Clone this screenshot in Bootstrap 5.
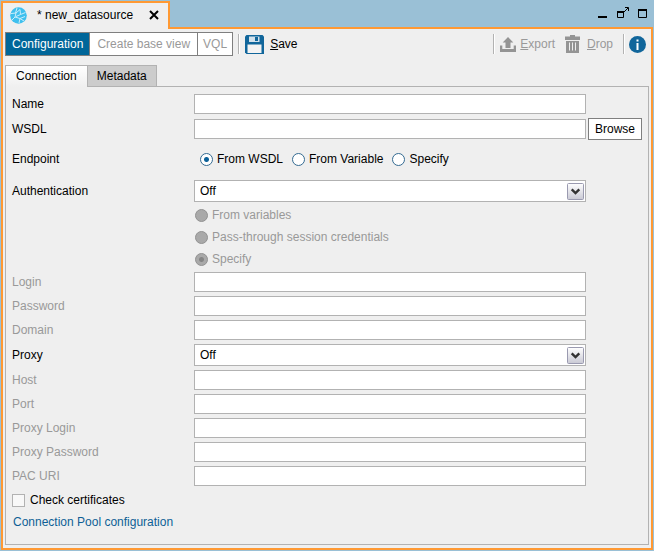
<!DOCTYPE html>
<html lang="en">
<head>
<meta charset="utf-8">
<meta name="viewport" content="width=device-width, initial-scale=1">
<title>new_datasource</title>
<link rel="stylesheet" href="https://cdn.jsdelivr.net/npm/bootstrap@5.3.0/dist/css/bootstrap.min.css">
<style>
:root{--sky:#9ac0d6;--orange:#ff9933;--face:#efefef;--line:#b2b2b2;--edge:#7f7f7f;--blue:#006699;--off:#999}
body{font:12px/16px "Liberation Sans",Arial,sans-serif;color:#000;background:var(--sky)}
.window{padding:1px}
.titlebar{height:26px}
.doc-tab{height:28px;margin-bottom:-2px;padding:0 9px 2px 7px;gap:10px;background:var(--face);border:2px solid var(--orange);border-bottom:0;z-index:1}
.doc-title{padding-right:6px}
.window-tools{gap:7px;padding-right:4px}
.plain{border:0;background:none;padding:0;color:#000;line-height:16px;display:flex;align-items:center}
.plain:disabled{color:var(--off)}
.frame{border:2px solid var(--orange);background:var(--face);padding:3px 2px 3px 2px}
.modes .btn{font-size:12px;line-height:16px;height:24px;padding:0 6px;border:1px solid var(--edge);border-radius:0;background:#fff;color:var(--off);opacity:1}
.modes .btn:disabled{padding:0 7px}
.modes .btn:last-child{padding:0 5px}
.modes .btn.active{background:var(--blue);color:#fff}
.rule{width:2px;height:20px;background:linear-gradient(90deg,var(--line) 50%,#fff 50%)}
.mode-rule{margin:0 5px}
.save{gap:6px}
.tools{padding-right:3px;gap:10px}
.tool{gap:4px}
.tool.drop{gap:7px}
.tool-set{gap:5px}
.info-set{gap:4px}
.tabs{margin-top:9px;height:21px}
.tabs .nav-link{height:21px;padding:0 9px;color:#000;border:1px solid var(--line);border-bottom:0;border-radius:0;background:#ccc;margin-left:-1px;line-height:21px}
.tabs .nav-link.active{height:22px;padding:0 10px;background:linear-gradient(#fff,var(--face));margin-left:0;position:relative;z-index:1}
.panel{border:1px solid var(--line);padding:7px 6px;gap:4px}
.line{height:20px}
.line.tall{height:22px}
.endpoint-line{margin:4px 0 6px}
.name{width:182px;flex:none}
.aside{width:54px;margin-left:2px;flex:none}
.muted,.muted label{color:var(--off)}
.form-control,.form-select{height:20px;min-height:0;padding:0 5px;font-size:12px;line-height:16px;color:#000;border:1px solid var(--line);border-radius:0;background-color:#fff}
.form-control:disabled{background:#fff}
.form-select{height:22px;background-size:17px 17px;background-position:right 1px top 2px;background-image:url("data:image/svg+xml,%3Csvg xmlns='http://www.w3.org/2000/svg' viewBox='0 0 17 17'%3E%3Cdefs%3E%3ClinearGradient id='g' x2='0' y2='1'%3E%3Cstop stop-color='%23fff'/%3E%3Cstop offset='1' stop-color='%23c9c9d4'/%3E%3C/linearGradient%3E%3C/defs%3E%3Crect x='.5' y='.5' width='16' height='16' rx='1' fill='url(%23g)' stroke='%239a9ab0'/%3E%3Cpath d='M4.7 6.3 8.5 10l3.8-3.7' fill='none' stroke='%23333' stroke-width='2.4'/%3E%3C/svg%3E")}
.browse{height:22px;padding:0;font-size:12px;line-height:16px;border:1px solid var(--edge);border-radius:0;background:#fff;color:#000}
.form-check-input{width:13px;height:13px;margin:0;flex:none;border-color:var(--line)}
.form-check-input[type=checkbox]{border-radius:0;background-color:#f8f8f8}
.form-check-input[type=radio]{border-color:#336a91;background-color:#fff;background-image:none}
.form-check-input[type=radio]:checked{background-image:radial-gradient(circle,#0b6199 2px,transparent 3px)}
.form-check-input[type=radio]:disabled{opacity:1;border-color:#929292;background-color:#a9a9a9}
.form-check-input[type=radio]:disabled:checked{background-image:radial-gradient(circle,#858585 2px,transparent 3px)}
.form-check-input:disabled~label{opacity:1;color:var(--off)}
.choice{display:flex;align-items:center;gap:4px;height:22px}
.choice.tick{gap:5px}
.endpoint{gap:9px;padding-left:6px}
.credentials{margin:-2px 0}
.credential-list{padding-left:1px}
.extras{margin-top:-1px}
.pool{color:#0e5f96;text-decoration:none;padding-left:1px;line-height:22px}
svg{display:block;flex:none}
</style>
<script src="https://cdn.jsdelivr.net/npm/bootstrap@5.3.0/dist/js/bootstrap.bundle.min.js"></script>
</head>
<body>
<div class="window min-vh-100 d-flex flex-column">
  <header class="titlebar d-flex justify-content-between">
    <div class="doc-tab d-flex align-items-center position-relative">
      <svg width="17" height="17" viewBox="0 0 17 17"><circle cx="8.500" cy="8.500" r="8.300" fill="#3fc0ee"/><path d="M1 6.500l5-.500 4-3.500M6 6l-1 4-3 3M5 10l5 1.500 5-2M10 11.500L9 16M10 2.500l.500 5L6 9.500M10.500 7.500l5-2M7 1L5.500 6M10 11.500l4 2.500" fill="none" stroke="#c9eefb" stroke-width="1"/></svg>
      <span class="doc-title">* new_datasource</span>
      <button class="plain" aria-label="Close tab"><svg width="10" height="10" viewBox="0 0 10 10"><path d="M1 1l8 8M9 1L1 9" stroke="#000" stroke-width="2"/></svg></button>
    </div>
    <div class="window-tools d-flex align-items-center">
      <button class="plain" aria-label="Minimize"><svg width="13" height="14" viewBox="0 0 13 14"><path d="M2 9h9v2H2z"/></svg></button>
      <button class="plain" aria-label="Detach"><svg width="13" height="14" viewBox="0 0 13 14"><path d="M1.500 4.500h6v6h-6zM7.500 5.500L12 1M9 .500h3.500V4" fill="none" stroke="#000"/><path d="M1 4h7v2H1z"/></svg></button>
      <button class="plain" aria-label="Maximize"><svg width="13" height="14" viewBox="0 0 13 14"><path d="M2.500 2.500h8v8h-8z" fill="none" stroke="#000"/><path d="M2 2h9v2H2z"/></svg></button>
    </div>
  </header>
  <main class="frame flex-grow-1 d-flex flex-column">
    <div class="d-flex justify-content-between align-items-center">
      <div class="d-flex align-items-center">
        <div class="btn-group modes">
          <button class="btn active">Configuration</button>
          <button class="btn" disabled>Create base view</button>
          <button class="btn" disabled>VQL</button>
        </div>
        <span class="rule mode-rule"></span>
        <button class="plain save"><svg width="19" height="19" viewBox="0 0 19 19"><path d="M1.500 0h16L19 1.500V19H1.500L0 17.500V1.500z" fill="#11669b"/><path d="M2.500 9.500h14V18h-14z" fill="#f3f3f3"/><path d="M4 1.500h10.500V7H4z" fill="#d3e2ec"/><path d="M10 2h3v4h-3z" fill="#11669b"/></svg><span><u>S</u>ave</span></button>
      </div>
      <div class="tools d-flex align-items-center">
        <div class="tool-set d-flex align-items-center">
          <span class="rule"></span>
          <button class="plain tool" disabled><svg width="16" height="15" viewBox="0 0 16 15"><path d="M8 0l5.300 5.500h-2.800V11h-5V5.500H2.700zM0 8.500h2.300V12h11.400V8.500H16V15H0z" fill="#949494"/></svg><span><u>E</u>xport</span></button>
        </div>
        <button class="plain tool drop" disabled><svg width="15" height="18" viewBox="0 0 15 18"><path d="M5 0h5v1.500h5V5H0V1.500h5zM1 6h13v12H1z" fill="#949494"/><path d="M4.500 7.500v8M7.500 7.500v8M10.500 7.500v8" stroke="#eee"/></svg><span><u>D</u>rop</span></button>
        <div class="info-set d-flex align-items-center">
          <span class="rule"></span>
          <button class="plain" aria-label="Information"><svg width="17" height="17" viewBox="0 0 17 17"><circle cx="8.500" cy="8.500" r="8.500" fill="#11669b"/><path d="M7.500 3.500h2v2h-2zM7.500 7h2v7h-2z" fill="#fff"/></svg></button>
        </div>
      </div>
    </div>
    <nav class="nav tabs">
      <a class="nav-link active" href="#connection">Connection</a>
      <a class="nav-link" href="#metadata">Metadata</a>
    </nav>
    <form class="panel flex-grow-1 d-flex flex-column" id="connection">
      <div class="line d-flex align-items-center"><label class="name" for="name">Name</label><input class="form-control" id="name"><span class="aside"></span></div>
      <div class="line tall d-flex align-items-center"><label class="name" for="wsdl">WSDL</label><input class="form-control" id="wsdl"><button type="button" class="btn browse aside">Browse</button></div>
      <div class="line tall endpoint-line d-flex align-items-center" role="radiogroup" aria-labelledby="endpoint"><span class="name" id="endpoint">Endpoint</span>
        <div class="endpoint d-flex">
          <div class="choice"><input class="form-check-input" type="radio" name="ep" id="ep1" checked><label for="ep1">From WSDL</label></div>
          <div class="choice"><input class="form-check-input" type="radio" name="ep" id="ep2"><label for="ep2">From Variable</label></div>
          <div class="choice"><input class="form-check-input" type="radio" name="ep" id="ep3"><label for="ep3">Specify</label></div>
        </div>
      </div>
      <div class="line tall d-flex align-items-center"><label class="name" for="auth">Authentication</label><select class="form-select" id="auth"><option>Off</option></select><span class="aside"></span></div>
      <div class="credentials d-flex"><span class="name"></span>
        <div class="credential-list">
          <div class="choice"><input class="form-check-input" type="radio" name="cr" id="cr1" disabled><label for="cr1">From variables</label></div>
          <div class="choice"><input class="form-check-input" type="radio" name="cr" id="cr2" disabled><label for="cr2">Pass-through session credentials</label></div>
          <div class="choice"><input class="form-check-input" type="radio" name="cr" id="cr3" disabled checked><label for="cr3">Specify</label></div>
        </div>
      </div>
      <div class="line muted d-flex align-items-center"><label class="name" for="login">Login</label><input class="form-control" id="login" disabled><span class="aside"></span></div>
      <div class="line muted d-flex align-items-center"><label class="name" for="pw">Password</label><input class="form-control" id="pw" type="password" disabled><span class="aside"></span></div>
      <div class="line muted d-flex align-items-center"><label class="name" for="domain">Domain</label><input class="form-control" id="domain" disabled><span class="aside"></span></div>
      <div class="line tall d-flex align-items-center"><label class="name" for="proxy">Proxy</label><select class="form-select" id="proxy"><option>Off</option></select><span class="aside"></span></div>
      <div class="line muted d-flex align-items-center"><label class="name" for="host">Host</label><input class="form-control" id="host" disabled><span class="aside"></span></div>
      <div class="line muted d-flex align-items-center"><label class="name" for="port">Port</label><input class="form-control" id="port" disabled><span class="aside"></span></div>
      <div class="line muted d-flex align-items-center"><label class="name" for="plogin">Proxy Login</label><input class="form-control" id="plogin" disabled><span class="aside"></span></div>
      <div class="line muted d-flex align-items-center"><label class="name" for="ppw">Proxy Password</label><input class="form-control" id="ppw" type="password" disabled><span class="aside"></span></div>
      <div class="line muted d-flex align-items-center"><label class="name" for="pac">PAC URI</label><input class="form-control" id="pac" disabled><span class="aside"></span></div>
      <div class="extras">
        <div class="choice tick"><input class="form-check-input" type="checkbox" id="cert"><label for="cert">Check certificates</label></div>
        <a class="pool" href="#pool">Connection Pool configuration</a>
      </div>
    </form>
  </main>
</div>
</body>
</html>
